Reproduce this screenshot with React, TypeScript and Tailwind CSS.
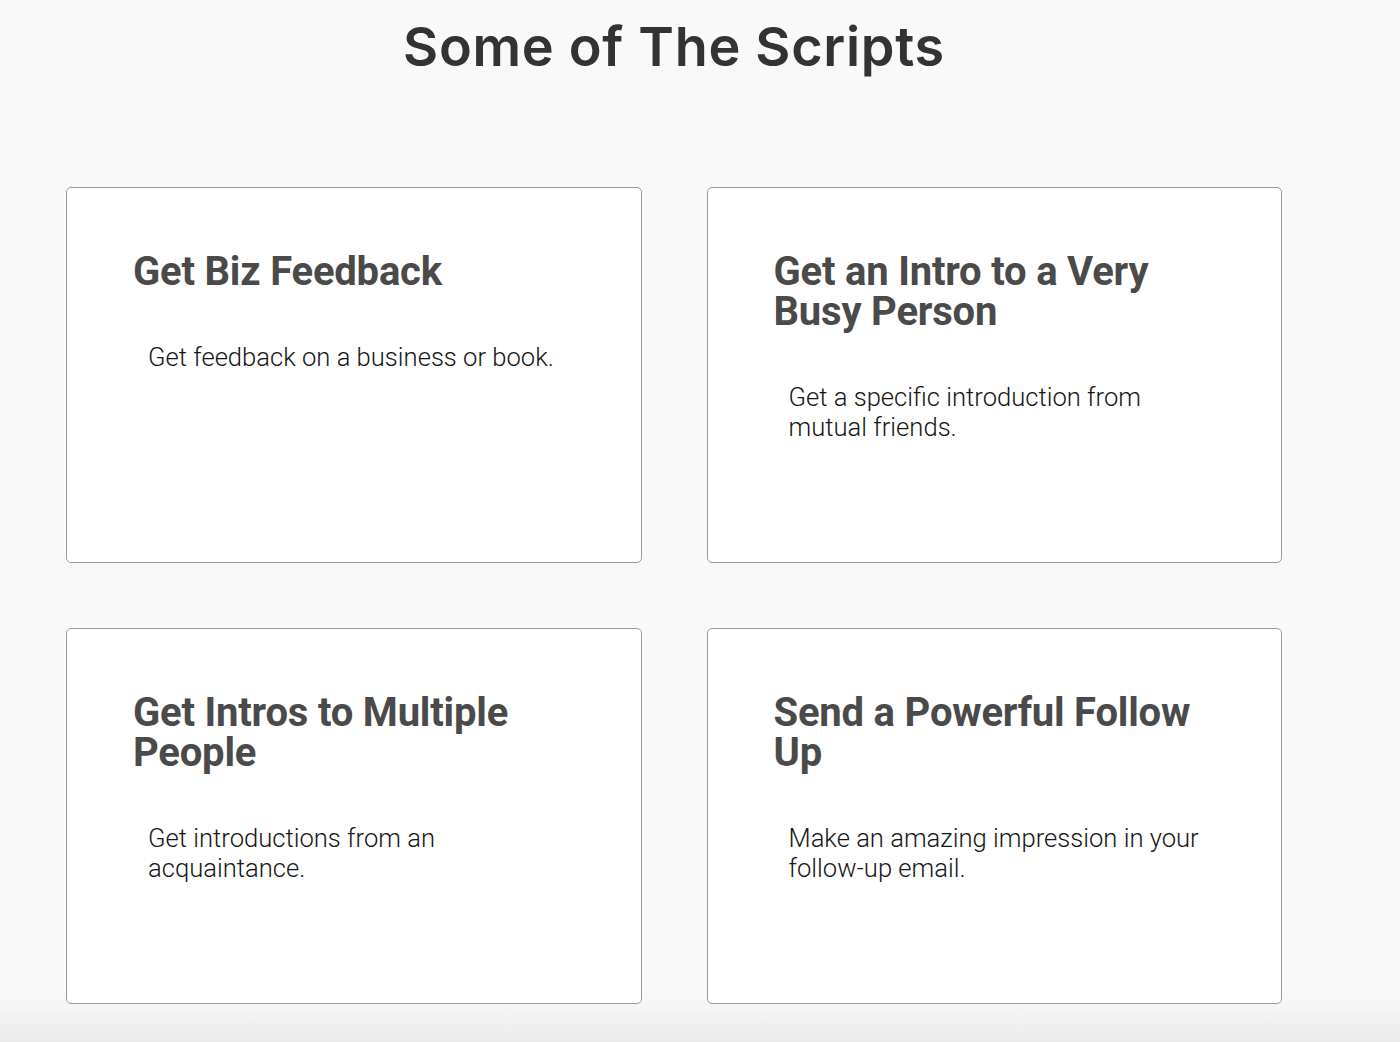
import React from 'react';

const scripts = [
  { title: 'Get Biz Feedback', text: 'Get feedback on a business or book.' },
  { title: 'Get an Intro to a Very Busy Person', text: 'Get a specific introduction from mutual friends.' },
  { title: 'Get Intros to Multiple People', text: 'Get introductions from an acquaintance.' },
  { title: 'Send a Powerful Follow Up', text: 'Make an amazing impression in your follow-up email.' },
];

function ScriptCard({ title, text }: { title: string; text: string }) {
  return (
    <div className="h-[376px] rounded-[5px] border border-[#9a9a9a] bg-white px-[66px] pt-[64px]">
      <h3 className="text-[40px] leading-[40px] font-bold text-[#4a4a4a] font-['Roboto',sans-serif] tracking-[-0.2px]">
        {title}
      </h3>
      <p className="mt-[50px] pl-[15px] pr-[8px] text-[25.6px] leading-[30px] font-light text-[#161616] font-['Roboto',sans-serif]">
        {text}
      </p>
    </div>
  );
}

export default function App() {
  return (
    <div className="min-h-[1042px] w-full bg-[linear-gradient(to_bottom,#f9f9f9_0px,#f9f9f9_992px,#ebebeb_1042px)]">
      <div className="mx-auto w-[1216px] -translate-x-[26px]">
        <h2 className="pt-[17px] text-center text-[54px] leading-[60px] font-semibold text-[#333333] font-['Inter',sans-serif] tracking-[0.7px]">
          Some of The Scripts
        </h2>
        {/* cards */}
        <div className="mt-[110px] grid grid-cols-2 gap-x-[65px] gap-y-[65px]">
          {scripts.map((s) => (
            <ScriptCard key={s.title} title={s.title} text={s.text} />
          ))}
        </div>
      </div>
    </div>
  );
}
